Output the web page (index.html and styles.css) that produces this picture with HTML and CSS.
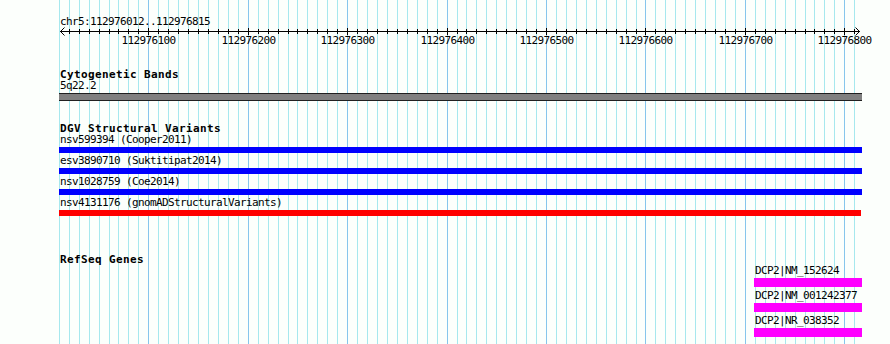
FILE: index.html
```html
<!DOCTYPE html>
<html lang="en">
<head>
  <meta charset="UTF-8">
  <title>chr5:112976012..112976815</title>
  <link rel="stylesheet" href="styles.css">
</head>
<body>
  <div class="browser">
    <svg class="grid" id="grid" width="890" height="344"></svg>

    <div class="tracks">
      <div class="ruler-track">
        <div class="segment">chr5:112976012..112976815</div>
        <svg class="ruler" id="ruler" width="890" height="18">
          <rect x="60" y="4" width="800" height="1"></rect>
          <path class="arrow" d="M64.5 0.5 L60.5 4.5 L64.5 8.5 M855.5 0.5 L859.5 4.5 L855.5 8.5"></path>
        </svg>
      </div>

      <div class="track track-cyto">
        <h2 class="track-title">Cytogenetic Bands</h2>
        <div class="feature-label">5q22.2</div>
        <div class="band"></div>
      </div>

      <div class="track track-dgv">
        <h2 class="track-title">DGV Structural Variants</h2>
        <div class="features">
          <div class="feature">
            <div class="feature-label">nsv599394 (Cooper2011)</div>
            <div class="bar bar-blue"></div>
          </div>
          <div class="feature">
            <div class="feature-label">esv3890710 (Suktitipat2014)</div>
            <div class="bar bar-blue"></div>
          </div>
          <div class="feature">
            <div class="feature-label">nsv1028759 (Coe2014)</div>
            <div class="bar bar-blue"></div>
          </div>
          <div class="feature">
            <div class="feature-label">nsv4131176 (gnomADStructuralVariants)</div>
            <div class="bar bar-red"></div>
          </div>
        </div>
      </div>

      <div class="track track-genes">
        <h2 class="track-title">RefSeq Genes</h2>
        <div class="features gene-features">
          <div class="feature">
            <div class="feature-label">DCP2|NM_152624</div>
            <div class="bar bar-gene"></div>
          </div>
          <div class="feature">
            <div class="feature-label">DCP2|NM_001242377</div>
            <div class="bar bar-gene"></div>
          </div>
          <div class="feature">
            <div class="feature-label">DCP2|NR_038352</div>
            <div class="bar bar-gene"></div>
          </div>
        </div>
      </div>
    </div>
  </div>

  <script src="script.js"></script>
</body>
</html>
```

FILE: styles.css
```css
* {
  margin: 0;
  padding: 0;
  box-sizing: border-box;
}

body {
  background: #fcfffc;
  color: #000;
  font-family: "DejaVu Sans Mono", "Liberation Mono", monospace;
}

.browser {
  position: relative;
  width: 890px;
  height: 344px;
  overflow: hidden;
  background: #fcfffc;
}

.grid {
  position: absolute;
  top: 0;
  left: 0;
}

.grid .minor {
  fill: #a6e8ee;
}

.grid .major {
  fill: #86c6ec;
}

.tracks {
  position: relative;
  padding-top: 16px;
  padding-left: 59px;
}

.segment,
.feature-label {
  font-size: 11px;
  line-height: 11px;
  letter-spacing: -0.62px;
  white-space: nowrap;
  padding-left: 1px;
}

.ruler {
  display: block;
  margin-left: -59px;
}

.ruler rect {
  fill: #000;
}

.ruler .arrow {
  fill: none;
  stroke: #000;
  stroke-width: 1;
}

.ruler text {
  font-family: "DejaVu Sans Mono", "Liberation Mono", monospace;
  font-size: 11px;
  letter-spacing: -0.62px;
  fill: #000;
}

.track-title {
  font-size: 11px;
  font-weight: bold;
  line-height: 11px;
  letter-spacing: 0.38px;
  white-space: nowrap;
  padding-left: 1px;
}

.track-cyto {
  margin-top: 24px;
}

.band {
  width: 803px;
  height: 8px;
  margin-top: 2px;
  background: #808080;
  border-top: 1px solid #202020;
  border-bottom: 1px solid #202020;
}

.track-dgv {
  margin-top: 22px;
}

.features {
  display: flex;
  flex-direction: column;
  gap: 2px;
}

.feature {
  display: flex;
  flex-direction: column;
  gap: 2px;
}

.bar {
  width: 803px;
  height: 6px;
}

.bar-blue {
  background: #0000ff;
}

.bar-red {
  width: 802px;
  background: #ff0000;
}

.track-genes {
  margin-top: 38px;
}

.gene-features {
  margin-left: 695px;
  gap: 3px;
}

.bar-gene {
  width: 108px;
  height: 9px;
  background: #ff00ff;
}
```

FILE: script.js
```js
const NS = 'http://www.w3.org/2000/svg';
const grid = document.getElementById('grid');
const ruler = document.getElementById('ruler');

// 112976100 sits at x=148.3, about 0.9943 px per base
function toX(bp) {
  return Math.round(148.3 + (bp - 112976100) * 0.9943);
}

function rect(parent, x, y, w, h, cls) {
  const r = document.createElementNS(NS, 'rect');
  r.setAttribute('x', x);
  r.setAttribute('y', y);
  r.setAttribute('width', w);
  r.setAttribute('height', h);
  if (cls) r.setAttribute('class', cls);
  parent.appendChild(r);
}

for (let bp = 112976010; bp <= 112976810; bp += 10) {
  const x = toX(bp);
  const major = bp % 100 === 0;

  rect(grid, x, 0, 1, 344, major ? 'major' : 'minor');

  if (bp > 112976010) {
    if (major) {
      rect(ruler, x, 1, 1, 7);
    } else {
      rect(ruler, x, 2, 1, 5);
    }
  }

  if (major) {
    const t = document.createElementNS(NS, 'text');
    t.setAttribute('x', x + 0.5);
    t.setAttribute('y', 16.5);
    t.setAttribute('text-anchor', 'middle');
    t.textContent = bp;
    ruler.appendChild(t);
  }
}
```
